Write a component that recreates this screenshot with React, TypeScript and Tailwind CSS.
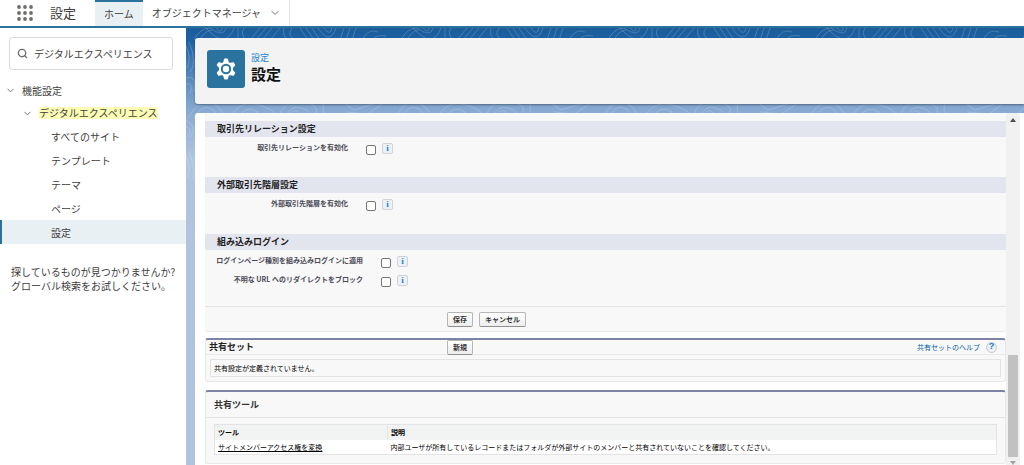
import React from "react";
import { ChevronDown, Search } from "lucide-react";

const navItems = ["すべてのサイト", "テンプレート", "テーマ", "ページ", "設定"];

function AppLauncher() {
  return (
    <svg viewBox="0 0 16 16" className="size-4" fill="#706e6b" aria-hidden="true">
      {[2, 8, 14].map((y) => [2, 8, 14].map((x) => <circle key={`${x}-${y}`} cx={x} cy={y} r="1.9" />))}
    </svg>
  );
}

function Gear() {
  return (
    <svg viewBox="0 0 24 24" className="size-6" aria-hidden="true">
      <path
        fill="#fff"
        stroke="#fff"
        strokeWidth="2"
        strokeLinejoin="round"
        d="M11 2.6h2l.9 3.2 2 1.2 3.2-.8 1.1 1.9-2.3 2.4v3l2.3 2.4-1.1 1.9-3.2-.8-2 1.2-.9 3.2h-2l-.9-3.2-2-1.2-3.2.8-1.1-1.9 2.3-2.4v-3L3.8 8.1l1.1-1.9 3.2.8 2-1.2z"
      />
      <circle cx="12" cy="12" r="5.2" fill="#2a739e" />
      <circle cx="12" cy="12" r="3.2" fill="#fff" />
    </svg>
  );
}

function Contours() {
  return (
    <svg className="absolute inset-0 -z-10 size-full" aria-hidden="true">
      <defs>
        <linearGradient id="sky" gradientUnits="userSpaceOnUse" x1="0" y1="0" x2="0" y2="130">
          <stop offset="0" stopColor="#1c5c9a" />
          <stop offset="0.1" stopColor="#1e62a3" />
          <stop offset="0.62" stopColor="#86a8d0" />
          <stop offset="1" stopColor="#b0c4df" />
        </linearGradient>
        <pattern id="topo" width="207" height="110" patternUnits="userSpaceOnUse">
          <g fill="none" stroke="#fff" strokeOpacity="0.18" strokeWidth="1">
            <path d="M8 12Q14 0 24 0M14 12Q18 3 26 2M24 0Q38 10 40 0M30 0Q36 6 36 0M20 0Q40 22 48 0M52 0V10M58 0Q54 6 60 12M64 12 74 0M70 12 80 0M76 12 86 0M84 12 94 0" />
            <path d="M98 0Q96 8 102 12M106 0Q100 8 110 12M114 0 122 12M120 0 128 12M126 0 134 12M132 0Q144 18 150 0M138 0Q144 9 146 0M154 12 158 0M160 12 164 0M166 12 170 0M176 12Q182 0 192 4M186 12Q190 6 200 8" />
            <path d="M2 90Q14 70 24 74T38 88M8 90Q16 76 24 80T30 90M44 90Q54 70 76 78T82 90M52 90Q60 76 72 84L62 90M92 90Q98 70 118 74T126 90M100 90Q104 76 116 80T120 90M106 84Q112 80 114 88M140 72Q132 84 144 90M154 72 168 82 194 74M160 84 184 86M176 90 196 76" />
            <path d="M0 18Q6 30 1 40M3 14Q12 36 4 44M0 50Q12 46 8 64M0 56Q8 54 4 66M-2 92Q12 96 5 109M-2 98Q8 100 2 109" />
          </g>
        </pattern>
      </defs>
      <rect width="100%" height="100%" fill="url(#sky)" />
      <rect width="100%" height="150" fill="url(#topo)" />
    </svg>
  );
}

function SectionTitle({ children }: { children: React.ReactNode }) {
  return <h2 className="h-4 bg-[#e3e5ee] px-3 text-[9px] leading-4 font-bold text-[#222]">{children}</h2>;
}

function Setting({ id, label, wide = false }: { id: string; label: string; wide?: boolean }) {
  return (
    <div className="flex h-[19px] items-start">
      <label
        htmlFor={id}
        className={`shrink-0 text-right text-[7px] leading-3 font-bold whitespace-nowrap text-[#4a4a56] ${wide ? "w-[158px]" : "w-[143px]"}`}
      >
        {label}
      </label>
      <input
        id={id}
        type="checkbox"
        className="mt-1 ml-[18px] size-[10px] appearance-none rounded-[2px] border border-[#767676] bg-white checked:bg-[#2a739e]"
      />
      <button
        type="button"
        aria-label="情報"
        className="mt-[2px] ml-[6px] size-[11px] rounded-[2px] border border-[#cfd3d8] bg-[#edf1f6] text-center font-['Liberation_Serif',serif] text-[9px] leading-[9px] font-bold text-[#1a86dd]"
      >
        i
      </button>
    </div>
  );
}

function SmallButton({ children }: { children: React.ReactNode }) {
  return (
    <button
      type="button"
      className="rounded-[2px] border border-[#b5b5b5] border-b-[#8f8f8f] bg-linear-to-b from-white to-[#ededed] px-[5px] text-[7px] leading-[13px] font-bold whitespace-nowrap text-[#333]"
    >
      {children}
    </button>
  );
}

export default function App() {
  return (
    <div className="flex h-screen flex-col overflow-hidden bg-white font-['Noto_Sans_CJK_JP','Liberation_Sans',sans-serif] text-[10px] text-[#3e3e3c]">
      <header className="flex h-7 shrink-0 items-stretch border-b-2 border-[#2a739e]">
        <button type="button" aria-label="アプリケーションランチャー" className="ml-[17px] flex items-center">
          <AppLauncher />
        </button>
        <div className="ml-[17px] flex w-[45px] items-center text-[13px]">設定</div>
        <nav className="flex">
          <a href="#home" className="flex items-center border-t-2 border-[#2a739e] bg-[#e8f0f3] px-[9px] pb-[2px]">
            ホーム
          </a>
          <a href="#objects" className="flex items-center gap-2 border-r border-[#e5e5e5] pr-2 pb-px pl-[9px]">
            オブジェクトマネージャ
            <ChevronDown className="size-3 text-[#706e6b]" />
          </a>
        </nav>
      </header>

      <div className="flex min-h-0 flex-1">
        <aside className="w-[186px] shrink-0 pt-[9px]">
          <label className="mr-[13px] ml-[9px] flex h-[33px] items-center gap-[6px] rounded-[3px] border border-[#dddbda] px-[7px]">
            <Search className="size-[11px] shrink-0 text-[#706e6b]" strokeWidth={3} />
            <input
              type="text"
              aria-label="クイック検索"
              defaultValue="デジタルエクスペリエンス"
              className="min-w-0 flex-1 bg-transparent outline-none"
            />
          </label>
          <nav className="mt-2">
            <div className="flex h-6 items-center gap-[6px] pl-[5px]">
              <ChevronDown className="size-[11px] text-[#706e6b]" />
              機能設定
            </div>
            <div className="flex h-[22px] items-center gap-[6px] pl-[22px]">
              <ChevronDown className="size-[11px] text-[#706e6b]" />
              <span className="bg-[#fbfdb4] leading-3">デジタルエクスペリエンス</span>
            </div>
            <ul>
              {navItems.map((item, i) => (
                <li key={item}>
                  <a
                    href={`#item-${i}`}
                    className={`flex h-6 items-center border-l-2 pl-[49px] ${item === "設定" ? "border-[#2a739e] bg-[#e8f0f3]" : "border-transparent"}`}
                  >
                    {item}
                  </a>
                </li>
              ))}
            </ul>
          </nav>
          <p className="mt-[21px] pl-[11px] leading-[14px] whitespace-nowrap">
            探しているものが見つかりませんか?
            <br />
            グローバル検索をお試しください。
          </p>
        </aside>

        <main className="relative isolate flex min-w-0 flex-1 flex-col pt-[10px] pl-[9px]">
          <Contours />
          <div className="mb-[9px] flex h-[66px] shrink-0 items-start gap-[6px] rounded-l-[3px] bg-[#f3f3f3] pt-3 pl-3 shadow-[0_1px_2px_rgba(0,0,0,0.35)]">
            <span className="flex size-[38px] items-center justify-center rounded-[3px] bg-[#2a739e]">
              <Gear />
            </span>
            <div className="pt-[2px]">
              <p className="text-[9px] leading-3 text-[#2185d5]">設定</p>
              <h1 className="text-[15px] leading-5 font-bold text-[#111]">設定</h1>
            </div>
          </div>

          <div className="flex min-h-0 flex-1 overflow-hidden rounded-tl-[3px] bg-white pr-1 pl-[10px]">
            <div className="min-w-0 flex-1 overflow-hidden">
              <section className="rounded-b-[3px] border-b border-[#e8e8e8] bg-[#f8f8f8] pt-2">
                <SectionTitle>取引先リレーション設定</SectionTitle>
                <div className="h-10 pt-1">
                  <Setting id="relation" label="取引先リレーションを有効化" />
                </div>
                <SectionTitle>外部取引先階層設定</SectionTitle>
                <div className="h-[41px] pt-1">
                  <Setting id="hierarchy" label="外部取引先階層を有効化" />
                </div>
                <SectionTitle>組み込みログイン</SectionTitle>
                <div className="h-14 pt-1">
                  <Setting id="login" label="ログインページ種別を組み込みログインに適用" wide />
                  <Setting id="redirect" label="不明な URL へのリダイレクトをブロック" wide />
                </div>
                <div className="flex h-[25px] items-center gap-[6px] border-t border-[#e3e3e3] pl-[242px]">
                  <SmallButton>保存</SmallButton>
                  <SmallButton>キャンセル</SmallButton>
                </div>
              </section>

              <section className="mt-[6px] rounded-[3px] border border-t-2 border-[#e8e8e8] border-t-[#7d83a5] bg-[#f8f8f8]">
                <div className="flex h-[15px] items-center border-b border-[#e8e8e8] pr-2 pl-[3px]">
                  <h2 className="w-[238px] text-[9px] font-bold text-[#222]">共有セット</h2>
                  <SmallButton>新規</SmallButton>
                  <a href="#help" className="ml-auto flex items-center gap-[6px] text-[7px] text-[#015ba7]">
                    共有セットのヘルプ
                    <span className="flex size-[11px] items-center justify-center rounded-full border border-[#c5cbd3] bg-[#edf1f6] font-['Liberation_Sans',sans-serif] text-[9px] font-bold text-[#1a76cd]">
                      ?
                    </span>
                  </a>
                </div>
                <p className="mx-1 my-1 h-[18px] border border-[#e3e3e3] px-[3px] text-[7px] leading-4 text-black">
                  共有設定が定義されていません。
                </p>
              </section>

              <section className="mt-2 rounded-[3px] border border-t-2 border-[#e8e8e8] border-t-[#7d83a5] bg-[#f8f8f8] pb-2">
                <h2 className="h-[26px] border-b border-[#e3e3e3] px-2 text-[9px] leading-[26px] font-bold text-[#333]">
                  共有ツール
                </h2>
                <div className="px-2 pt-[6px]">
                  <table className="w-full table-fixed border-collapse border border-[#e3e3e3] bg-white text-left text-[7px] text-black">
                    <thead className="bg-[#f2f3f3]">
                      <tr className="h-[15px]">
                        <th className="w-[173px] border-r border-[#e3e3e3] px-[3px] leading-3 font-bold">ツール</th>
                        <th className="px-[3px] leading-3 font-bold">説明</th>
                      </tr>
                    </thead>
                    <tbody>
                      <tr className="h-[15px]">
                        <td className="px-[3px] leading-3">
                          <a href="#convert" className="underline">
                            サイトメンバーアクセス権を変換
                          </a>
                        </td>
                        <td className="px-[3px] leading-3 whitespace-nowrap">
                          内部ユーザが所有しているレコードまたはフォルダが外部サイトのメンバーと共有されていないことを確認してください。
                        </td>
                      </tr>
                    </tbody>
                  </table>
                </div>
              </section>
            </div>
            <div className="flex w-[14px] shrink-0 flex-col items-center bg-[#f1f1f1]" aria-hidden="true">
              <svg viewBox="0 0 6 4" className="mt-[5px] h-1 w-[6px] shrink-0" fill="#505050">
                <path d="M0 4 3 0l3 4z" />
              </svg>
              <div className="grow-[235]" />
              <div className="w-[10px] grow-[103] bg-[#c1c1c1]" />
              <svg viewBox="0 0 6 4" className="mt-1 h-1 w-[6px] shrink-0" fill="#a3a3a3">
                <path d="M0 0h6L3 4z" />
              </svg>
            </div>
          </div>
        </main>
      </div>
    </div>
  );
}
